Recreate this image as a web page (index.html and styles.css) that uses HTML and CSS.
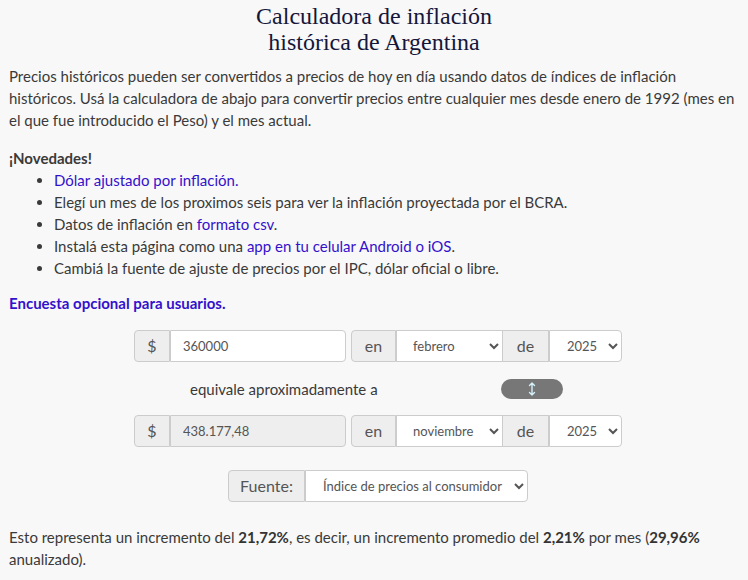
FILE: index.html
```html
<!DOCTYPE html>
<html lang="es">
<head>
<meta charset="utf-8">
<title>Calculadora de inflación</title>
<link rel="stylesheet" href="styles.css">
</head>
<body>
<div class="page">
  <h1 class="title">Calculadora de inflación<br>histórica de Argentina</h1>
  <p class="intro">Precios históricos pueden ser convertidos a precios de hoy en día usando datos de índices de inflación históricos. Usá la calculadora de abajo para convertir precios entre cualquier mes desde enero de 1992 (mes en el que fue introducido el Peso) y el mes actual.</p>
  <div class="news">
    <div class="news-title">¡Novedades!</div>
    <ul class="news-list">
      <li><a href="#">Dólar ajustado por inflación.</a></li>
      <li>Elegí un mes de los proximos seis para ver la inflación proyectada por el BCRA.</li>
      <li>Datos de inflación en <a href="#">formato csv</a>.</li>
      <li>Instalá esta página como una <a href="#">app en tu celular Android o iOS</a>.</li>
      <li>Cambiá la fuente de ajuste de precios por el IPC, dólar oficial o libre.</li>
    </ul>
  </div>
  <a class="survey" href="#">Encuesta opcional para usuarios.</a>

  <div class="calc">
    <div class="row">
      <div class="group g-amount">
        <span class="addon a-dollar">$</span>
        <input class="field f-amount" type="text" value="360000">
      </div>
      <div class="group g-date">
        <span class="addon a-en">en</span>
        <select class="field f-month"><option>febrero</option></select>
        <span class="addon a-de">de</span>
        <select class="field f-year"><option>2025</option></select>
      </div>
    </div>
    <div class="row mid">
      <span class="equiv">equivale aproximadamente a</span>
      <button class="swap" type="button" aria-label="invertir">
        <svg width="10" height="16" viewBox="0 0 10 16"><path d="M5 2v12M2.5 4.5L5 2l2.5 2.5M2.5 11.5L5 14l2.5-2.5" fill="none" stroke="#d4f0fa" stroke-width="1.4" stroke-linecap="round" stroke-linejoin="round"/></svg>
      </button>
    </div>
    <div class="row">
      <div class="group g-amount">
        <span class="addon a-dollar">$</span>
        <input class="field f-amount readonly" type="text" value="438.177,48" readonly>
      </div>
      <div class="group g-date">
        <span class="addon a-en">en</span>
        <select class="field f-month"><option>noviembre</option></select>
        <span class="addon a-de">de</span>
        <select class="field f-year"><option>2025</option></select>
      </div>
    </div>
    <div class="row source">
      <div class="group g-source">
        <span class="addon a-fuente">Fuente:</span>
        <select class="field f-source"><option>Índice de precios al consumidor</option></select>
      </div>
    </div>
  </div>

  <p class="result">Esto representa un incremento del <b>21,72%</b>, es decir, un incremento promedio del <b>2,21%</b> por mes (<b>29,96%</b> anualizado).</p>
</div>
</body>
</html>
```

FILE: styles.css
```css
html, body {
  margin: 0;
  padding: 0;
  background: #f8f8f8;
}
body {
  font-family: Lato, "Liberation Sans", sans-serif;
  font-size: 15px;
  line-height: 22px;
  color: #3a3a3a;
}
.page {
  padding: 0 9px;
}
.title {
  margin: 3px 0 0;
  text-align: center;
  font-family: "Liberation Serif", serif;
  font-weight: normal;
  font-size: 24px;
  line-height: 26px;
  color: #14163a;
}
.intro {
  margin: 10px 0 0;
}
a {
  color: #3311cc;
  text-decoration: none;
}
.news {
  margin-top: 16px;
}
.news-title {
  font-weight: bold;
}
.news-list {
  margin: 0;
  padding-left: 45px;
}
.survey {
  display: block;
  margin-top: 13px;
  font-weight: bold;
}
.calc {
  margin-top: 16px;
  display: flex;
  flex-direction: column;
  align-items: center;
}
.row {
  display: flex;
  gap: 5px;
  margin-left: 8px;
}
.group {
  display: flex;
  height: 32px;
}
.addon {
  box-sizing: border-box;
  display: flex;
  align-items: center;
  justify-content: center;
  background: #eeeeee;
  border: 1px solid #cccccc;
  color: #555;
  font-size: 16px;
}
.group > :first-child {
  border-radius: 4px 0 0 4px;
}
.group > :last-child {
  border-radius: 0 4px 4px 0;
}
.group > * + * {
  border-left: none;
}
.field {
  box-sizing: border-box;
  height: 32px;
  margin: 0;
  border: 1px solid #cccccc;
  background: #ffffff;
  color: #555;
  font-family: Lato, sans-serif;
  font-size: 13px;
  outline: none;
}
.a-dollar { width: 36px; }
.f-amount { width: 176px; padding: 0 0 0 12px; }
.f-amount.readonly { background: #eeeeee; }
.a-en { width: 45px; }
.f-month { width: 107px; padding-left: 12px; }
.a-de { width: 46px; }
.f-year { width: 73px; padding-left: 13px; }
.mid {
  height: 53px;
  align-items: center;
  width: 486px;
  gap: 0;
}
.equiv {
  margin-left: 55px;
  font-size: 15px;
}
.swap {
  margin-left: 123px;
  width: 62px;
  height: 20px;
  border: none;
  border-radius: 10px;
  background: #777777;
  padding: 0;
  display: flex;
  align-items: center;
  justify-content: center;
}
.source {
  margin-top: 23px;
}
.a-fuente { width: 77px; }
.f-source { width: 223px; padding-left: 13px; }
.result {
  margin: 24px 0 0;
}
.result b {
  color: #333;
}
```
